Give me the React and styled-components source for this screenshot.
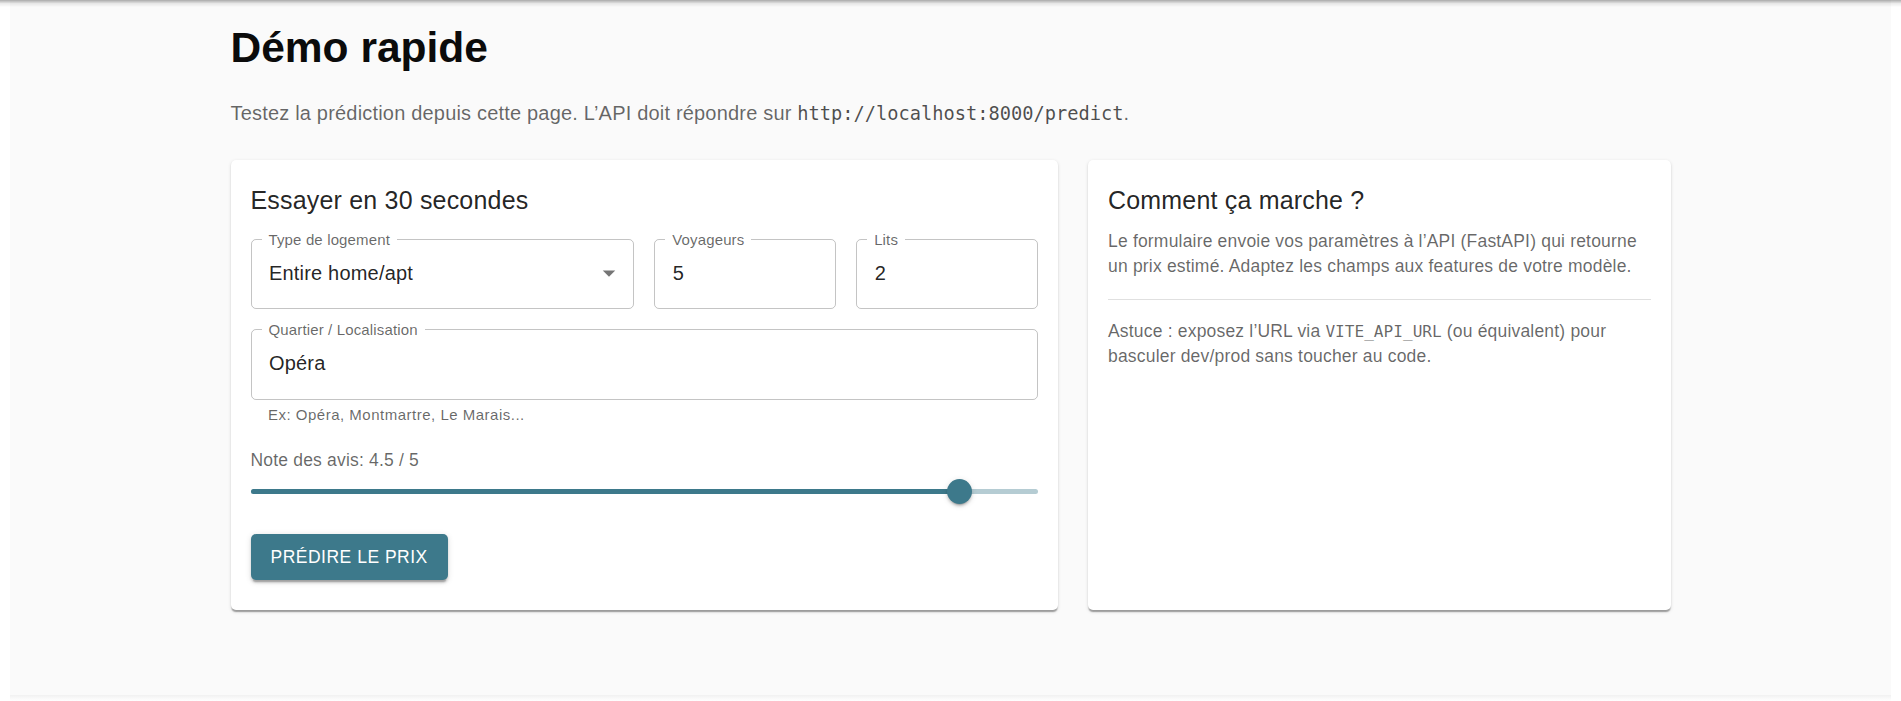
import React from "react";
import styled, { createGlobalStyle } from "styled-components";

const PRIMARY = "#3d798b";

const GlobalStyle = createGlobalStyle`
  html, body {
    margin: 0;
    padding: 0;
    background: #fff;
  }
  body {
    padding: 0 10px;
    font-family: "Liberation Sans", Arial, Helvetica, sans-serif;
    color: rgba(0, 0, 0, 0.87);
  }
`;

const TopShade = styled.div`
  position: fixed;
  top: 0;
  left: 0;
  right: 0;
  height: 7px;
  pointer-events: none;
  background: linear-gradient(rgba(0, 0, 0, 0.32), rgba(0, 0, 0, 0.08) 50%, rgba(0, 0, 0, 0));
`;

const Page = styled.div`
  background: #fafafa;
  min-height: 695px;
  box-sizing: border-box;
`;

const BottomShade = styled.div`
  height: 6px;
  background: linear-gradient(#f1f1f1, #fff);
`;

const Container = styled.main`
  max-width: 1440px;
  margin: 0 auto;
  padding-top: 22px;
`;

const Title = styled.h1`
  margin: 0;
  font-size: 42.5px;
  line-height: 1.235;
  font-weight: 700;
  color: #0b0b0b;
`;

const Lead = styled.p`
  margin: 23.5px 0 0;
  font-size: 20px;
  line-height: 30px;
  letter-spacing: 0.00938em;
  color: rgba(0, 0, 0, 0.6);
`;

const Code = styled.code`
  font-family: "DejaVu Sans Mono", "Liberation Mono", monospace;
  font-size: ${props => props.small ? "0.92em" : "0.935em"};
  letter-spacing: 0;
  color: ${props => props.small ? "rgba(0, 0, 0, 0.6)" : "rgba(0, 0, 0, 0.7)"};
`;

const Columns = styled.div`
  display: grid;
  grid-template-columns: 827.5px 582.5px;
  gap: 30px;
  margin-top: 31px;
`;

const Card = styled.section`
  background: #fff;
  border-radius: 5px;
  padding: 20px 20px 30px;
  box-shadow: 0 2.5px 1.25px -1.25px rgba(0, 0, 0, 0.2),
    0 1.25px 1.25px 0 rgba(0, 0, 0, 0.14),
    0 1.25px 3.75px 0 rgba(0, 0, 0, 0.12);
`;

const CardTitle = styled.h2`
  margin: 0 0 8.75px;
  font-size: 25px;
  line-height: 40px;
  font-weight: 400;
  letter-spacing: 0.0075em;
  color: rgba(0, 0, 0, 0.87);
`;

const FieldRow = styled.div`
  display: grid;
  grid-template-columns: 2.11fr 1fr 1fr;
  column-gap: 20px;
`;

const Field = styled.fieldset`
  margin: ${props => props.spaced ? "9.8px 0 0" : "0"};
  padding: 0 10px;
  min-width: 0;
  border: 1px solid rgba(0, 0, 0, 0.23);
  border-radius: 5px;
`;

const Legend = styled.legend`
  padding: 0 7px;
  font-size: 15px;
  line-height: 21px;
  letter-spacing: 0.00938em;
  color: rgba(0, 0, 0, 0.6);
  white-space: nowrap;
`;

const Value = styled.div`
  display: flex;
  align-items: center;
  justify-content: space-between;
  padding: 12.3px 0 23.2px 7.5px;
  font-size: 20px;
  line-height: 23px;
  letter-spacing: 0.00938em;
  color: rgba(0, 0, 0, 0.87);
`;

const Caret = styled.svg`
  width: 30px;
  height: 30px;
  margin: -4px -1px -3px 0;
  fill: rgba(0, 0, 0, 0.54);
  flex: none;
`;

const Helper = styled.p`
  margin: 3.75px 0 0 17.5px;
  font-size: 15px;
  line-height: 24.9px;
  letter-spacing: 0.03333em;
  color: rgba(0, 0, 0, 0.6);
`;

const SliderLabel = styled.p`
  margin: 20px 0 0;
  font-size: 17.5px;
  line-height: 25px;
  letter-spacing: 0.01071em;
  color: rgba(0, 0, 0, 0.6);
`;

const Slider = styled.div`
  position: relative;
  height: 37.5px;
`;

const Rail = styled.div`
  position: absolute;
  left: 0;
  right: 0;
  top: 16.25px;
  height: 5px;
  border-radius: 3px;
  background: ${PRIMARY};
  opacity: 0.38;
`;

const Track = styled.div`
  position: absolute;
  left: 0;
  top: 16.25px;
  height: 5px;
  border-radius: 3px;
  background: ${PRIMARY};
`;

const Thumb = styled.div`
  position: absolute;
  top: 6.25px;
  width: 25px;
  height: 25px;
  margin-left: -12.5px;
  border-radius: 50%;
  background: ${PRIMARY};
  box-shadow: 0 3.75px 1.25px -2.5px rgba(0, 0, 0, 0.2),
    0 2.5px 2.5px 0 rgba(0, 0, 0, 0.14),
    0 1.25px 6.25px 0 rgba(0, 0, 0, 0.12);
`;

const Button = styled.button`
  display: block;
  margin-top: 23.5px;
  padding: 7.5px 20px;
  border: 0;
  border-radius: 5px;
  background: ${PRIMARY};
  color: #fff;
  font-family: inherit;
  font-size: 17.5px;
  line-height: 30.6px;
  font-weight: 400;
  letter-spacing: 0.02857em;
  text-transform: uppercase;
  cursor: pointer;
  box-shadow: 0 3.75px 1.25px -2.5px rgba(0, 0, 0, 0.2),
    0 2.5px 2.5px 0 rgba(0, 0, 0, 0.14),
    0 1.25px 6.25px 0 rgba(0, 0, 0, 0.12);
`;

const Text = styled.p`
  margin: 0;
  font-size: 17.5px;
  line-height: 25px;
  letter-spacing: 0.01071em;
  color: rgba(0, 0, 0, 0.6);
`;

const Divider = styled.hr`
  margin: 20px 0 19.5px;
  border: 0;
  border-top: 1px solid rgba(0, 0, 0, 0.12);
`;

function OutlinedField({ label, children, spaced }) {
  return (
    <Field spaced={spaced}>
      <Legend>{label}</Legend>
      <Value>{children}</Value>
    </Field>
  );
}

function ReviewSlider({ value, max }) {
  const pct = (value / max) * 100;
  return (
    <Slider>
      <Rail />
      <Track style={{ width: `${pct}%` }} />
      <Thumb style={{ left: `${pct}%` }} />
    </Slider>
  );
}

export default function App() {
  const rating = 4.5;
  return (
    <>
      <GlobalStyle />
      <Page>
        <Container>
          <Title>Démo rapide</Title>
          <Lead>
            Testez la prédiction depuis cette page. L’API doit répondre sur <Code>http://localhost:8000/predict</Code>.
          </Lead>
          <Columns>
            <Card>
              <CardTitle>Essayer en 30 secondes</CardTitle>
              <FieldRow>
                <OutlinedField label="Type de logement">
                  <span>Entire home/apt</span>
                  <Caret viewBox="0 0 24 24"><path d="M7 10l5 5 5-5z" /></Caret>
                </OutlinedField>
                <OutlinedField label="Voyageurs">5</OutlinedField>
                <OutlinedField label="Lits">2</OutlinedField>
              </FieldRow>
              <OutlinedField label="Quartier / Localisation" spaced>Opéra</OutlinedField>
              <Helper>Ex: Opéra, Montmartre, Le Marais...</Helper>
              <SliderLabel>Note des avis: {rating} / 5</SliderLabel>
              <ReviewSlider value={rating} max={5} />
              <Button>Prédire le prix</Button>
            </Card>
            <Card>
              <CardTitle>Comment ça marche ?</CardTitle>
              <Text>
                Le formulaire envoie vos paramètres à l’API (FastAPI) qui retourne un prix estimé. Adaptez les champs aux features de votre modèle.
              </Text>
              <Divider />
              <Text>
                Astuce : exposez l’URL via <Code small>VITE_API_URL</Code> (ou équivalent) pour basculer dev/prod sans toucher au code.
              </Text>
            </Card>
          </Columns>
        </Container>
      </Page>
      <BottomShade />
      <TopShade />
    </>
  );
}
